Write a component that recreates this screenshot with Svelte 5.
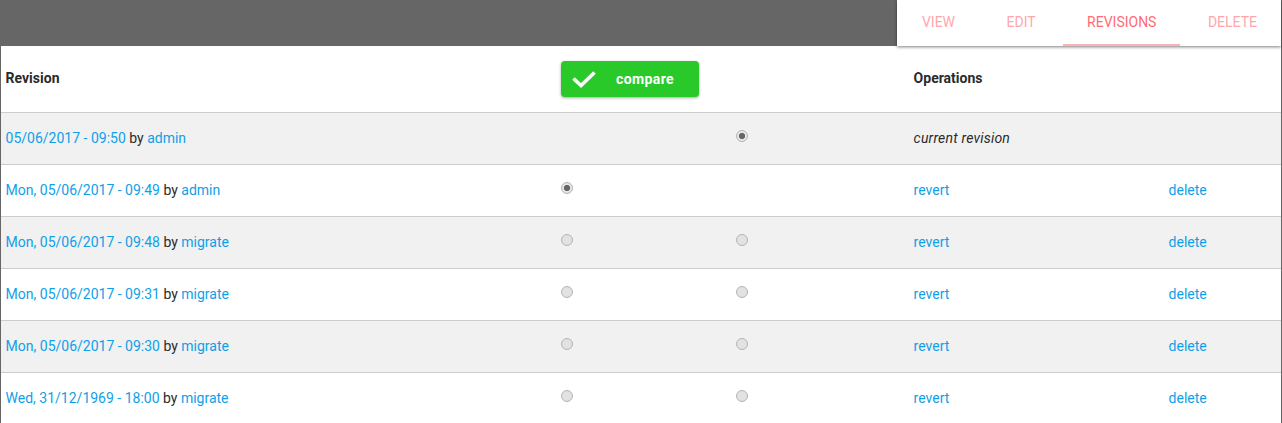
<script>
  const tabs = ['View', 'Edit', 'Revisions', 'Delete'];
  const activeTab = 'Revisions';

  const revisions = [
    { date: '05/06/2017 - 09:50', author: 'admin', left: null, right: 'on', current: true },
    { date: 'Mon, 05/06/2017 - 09:49', author: 'admin', left: 'on', right: null },
    { date: 'Mon, 05/06/2017 - 09:48', author: 'migrate', left: 'off', right: 'off' },
    { date: 'Mon, 05/06/2017 - 09:31', author: 'migrate', left: 'off', right: 'off' },
    { date: 'Mon, 05/06/2017 - 09:30', author: 'migrate', left: 'off', right: 'off' },
    { date: 'Wed, 31/12/1969 - 18:00', author: 'migrate', left: 'off', right: 'off' }
  ];
</script>

<div class="page">
  <header class="topbar">
    <nav class="tabs">
      {#each tabs as tab}
        <a href="#{tab}" class="tab" class:active={tab === activeTab}>{tab}</a>
      {/each}
    </nav>
  </header>

  <table>
    <colgroup>
      <col class="c-rev" />
      <col class="c-left" />
      <col class="c-right" />
      <col class="c-op" />
      <col />
    </colgroup>
    <thead>
      <tr>
        <th>Revision</th>
        <th colspan="2">
          <button class="compare">
            <svg width="26" height="20" viewBox="0 0 26 20" aria-hidden="true">
              <path d="M2.5 9.5 L10 16.5 L23.5 3.5" fill="none" stroke="#fff" stroke-width="3.6" />
            </svg>
            <span>compare</span>
          </button>
        </th>
        <th colspan="2">Operations</th>
      </tr>
    </thead>
    <tbody>
      {#each revisions as rev}
        <tr>
          <td><a href="#rev">{rev.date}</a> by <a href="#user">{rev.author}</a></td>
          <td>{#if rev.left}<span class="radio {rev.left}"></span>{/if}</td>
          <td>{#if rev.right}<span class="radio {rev.right}"></span>{/if}</td>
          {#if rev.current}
            <td colspan="2"><em>current revision</em></td>
          {:else}
            <td><a href="#revert">revert</a></td>
            <td><a href="#delete">delete</a></td>
          {/if}
        </tr>
      {/each}
    </tbody>
  </table>
</div>

<style>
  :global(body) {
    margin: 0;
    background: #666;
    overflow: hidden;
  }

  .page {
    font-family: Roboto, "Liberation Sans", sans-serif;
    font-size: 14px;
    color: #2b2b2b;
    height: 423px;
    overflow: hidden;
  }

  .topbar {
    height: 46px;
    display: flex;
    justify-content: flex-end;
    position: relative;
    z-index: 1;
  }

  .tabs {
    display: flex;
    gap: 3.47px;
    width: 384px;
    margin-right: 1px;
    justify-content: flex-end;
    background: #fff;
    box-shadow: 0 1px 3px rgba(0, 0, 0, 0.5);
  }

  .tab {
    box-sizing: border-box;
    height: 46px;
    line-height: 44px;
    padding: 0 24px;
    color: #ff6b75;
    opacity: 0.6;
    text-decoration: none;
    text-transform: uppercase;
  }

  .tab.active {
    opacity: 1;
    position: relative;
  }

  .tab.active::after {
    content: "";
    position: absolute;
    left: 0;
    right: 0;
    bottom: 0;
    height: 2px;
    background: #f9b0b6;
  }

  table {
    width: 1280px;
    margin: 0 1px;
    table-layout: fixed;
    border-collapse: collapse;
    background: #fff;
  }

  .c-rev {
    width: 555px;
  }

  .c-left {
    width: 175px;
  }

  .c-right {
    width: 178px;
  }

  .c-op {
    width: 255px;
  }

  th,
  td {
    padding: 0 5px 2px 4.6px;
    text-align: left;
    vertical-align: middle;
  }

  th {
    height: 64px;
    font-weight: 700;
  }

  tbody tr {
    height: 52px;
    border-top: 1px solid #ccc;
  }

  tbody tr:nth-child(odd) {
    background: #f1f1f1;
  }

  td a {
    color: #0f9fe8;
    text-decoration: none;
  }

  em {
    letter-spacing: 0.2px;
  }

  .compare {
    width: 138px;
    height: 36px;
    margin: 2px 0 0 0.4px;
    padding: 0 0 0 10px;
    display: flex;
    align-items: center;
    border: none;
    border-radius: 4px;
    background: #2ac92a;
    box-shadow: 0 1px 3px rgba(0, 0, 0, 0.35);
    color: #fff;
    font: 700 14px Roboto, "Liberation Sans", sans-serif;
    letter-spacing: 0.4px;
  }

  .compare span {
    margin-left: 19px;
  }

  .radio {
    display: block;
    box-sizing: border-box;
    width: 12px;
    height: 12px;
    margin: -3px 0 0 0.4px;
    border-radius: 50%;
    border: 1.5px solid #b4b4b4;
    background: #e2e2e2;
  }

  .radio.on {
    background: radial-gradient(circle, #666 0 2.8px, #e6e6e6 3.4px);
  }
</style>
